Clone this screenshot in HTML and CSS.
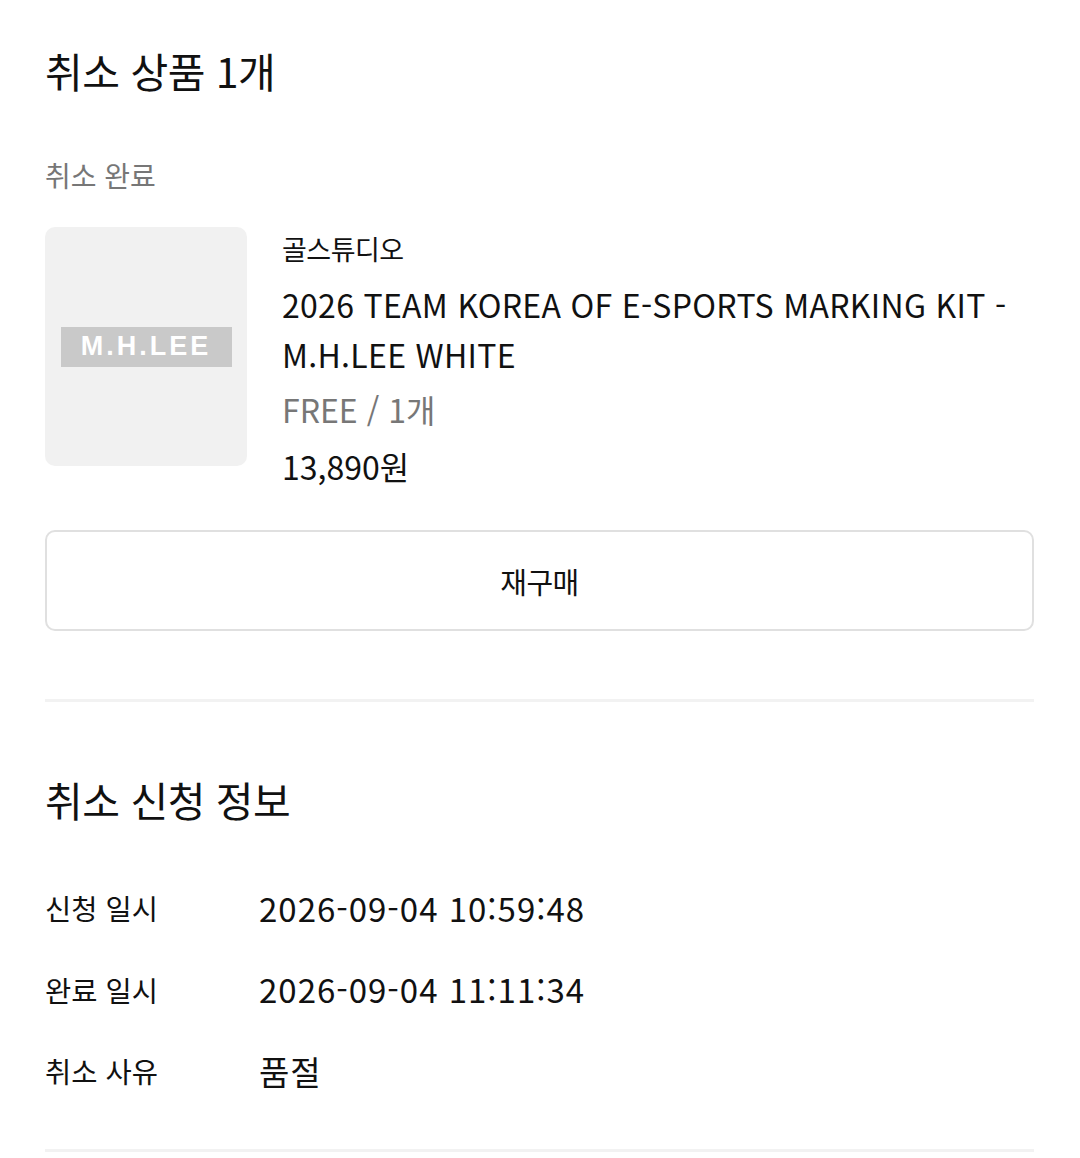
FILE: index.html
```html
<!DOCTYPE html>
<html lang="ko">
<head>
<meta charset="utf-8">
<link rel="stylesheet" href="styles.css">
</head>
<body>
<div class="page">
  <section class="section">
    <h2 class="title">취소 상품 1개</h2>
    <div class="status">취소 완료</div>
    <div class="product">
      <div class="thumb"><span class="thumb-label">M.H.LEE</span></div>
      <div class="info">
        <div class="brand">골스튜디오</div>
        <div class="name">2026 TEAM KOREA OF E-SPORTS MARKING KIT - M.H.LEE WHITE</div>
        <div class="option">FREE / 1개</div>
        <div class="price">13,890원</div>
      </div>
    </div>
    <button class="rebuy">재구매</button>
  </section>
  <hr class="divider">
  <section class="section">
    <h2 class="title title2">취소 신청 정보</h2>
    <dl class="rows">
      <div class="row"><dt>신청 일시</dt><dd>2026-09-04 10:59:48</dd></div>
      <div class="row"><dt>완료 일시</dt><dd>2026-09-04 11:11:34</dd></div>
      <div class="row"><dt>취소 사유</dt><dd>품절</dd></div>
    </dl>
  </section>
  <hr class="divider bottom">
</div>
</body>
</html>
```
FILE: styles.css
```css
* { box-sizing: border-box; }
html, body { margin: 0; padding: 0; background: #fff; }
body {
  font-family: "Noto Sans CJK KR", "Noto Sans", sans-serif;
  color: #111;
}
.page { padding: 0 46px 0 45px; }
.section { display: flex; flex-direction: column; }
.title {
  margin: 0;
  padding-top: 42px;
  font-size: 41px;
  font-weight: 400;
  line-height: 56px;
  letter-spacing: -0.5px;
}
.status {
  margin-top: 57px;
  font-size: 28px;
  line-height: 40px;
  color: #777;
}
.product {
  display: flex;
  gap: 35px;
  margin-top: 32px;
}
.thumb {
  width: 202px;
  height: 239px;
  flex: none;
  background: #f1f1f1;
  border-radius: 10px;
  display: flex;
  align-items: center;
  justify-content: center;
}
.thumb-label {
  width: 171px;
  height: 40px;
  background: #c9c9c9;
  color: #fff;
  font-family: "Liberation Sans", Arial, sans-serif;
  font-weight: 700;
  font-size: 27px;
  letter-spacing: 3px;
  display: flex;
  align-items: center;
  justify-content: center;
}
.info { display: flex; flex-direction: column; }
.brand { font-size: 27px; line-height: 44px; letter-spacing: -0.5px; }
.name { font-size: 32px; line-height: 50px; margin-top: 8px; letter-spacing: 0.3px; }
.option { font-size: 32px; line-height: 56px; color: #777; margin-top: 2px; }
.price { font-size: 32px; line-height: 56px; margin-top: 1px; }
.rebuy {
  margin-top: 36px;
  height: 101px;
  width: 100%;
  background: #fff;
  border: 2px solid #e0e0e0;
  border-radius: 10px;
  font-family: inherit;
  font-size: 29px;
  color: #111;
  letter-spacing: -0.5px;
}
.divider {
  margin: 68px 0 0;
  border: 0;
  height: 3px;
  background: #f2f2f2;
}
.title2 { padding-top: 69px; }
.rows { margin: 40px 0 0; padding: 0; }
.row { display: flex; align-items: center; height: 81.5px; }
.row dt { width: 214px; flex: none; font-size: 28.5px; }
.row dd { margin: 0; font-size: 33px; letter-spacing: 1px; }
.bottom { margin-top: 37px; }
```
